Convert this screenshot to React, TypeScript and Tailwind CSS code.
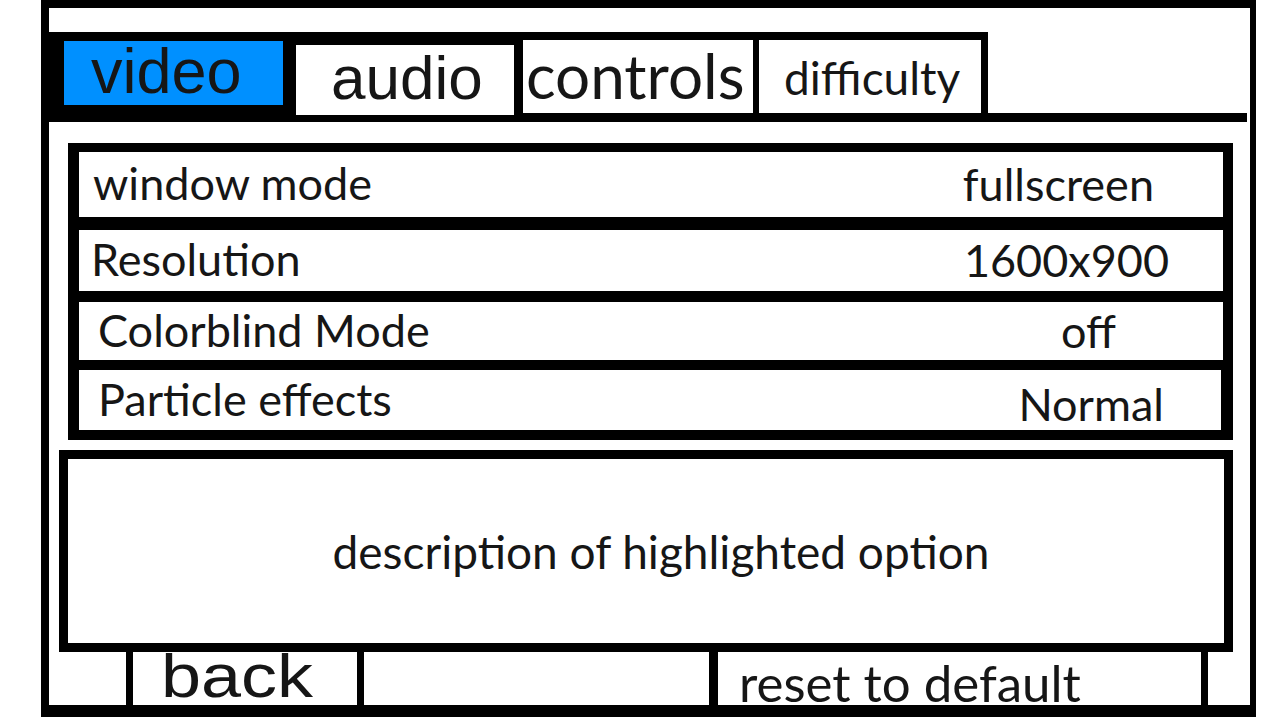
import { FC } from "react";

type Row = { label: string; value: string; labelPad: string; valuePad: string; rowClass: string };

const rows: Row[] = [
  { label: "window mode", value: "fullscreen", labelPad: "pl-[14px]", valuePad: "mr-[69px]", rowClass: "h-[65px]" },
  { label: "Resolution", value: "1600x900", labelPad: "pl-[12px]", valuePad: "mr-[54px]", rowClass: "mt-[13px] h-[61px]" },
  { label: "Colorblind Mode", value: "off", labelPad: "pl-[19px]", valuePad: "mr-[107px]", rowClass: "mt-[11px] h-[58px]" },
  { label: "Particle effects", value: "Normal", labelPad: "pl-[19px]", valuePad: "mr-[57px] mt-[8px]", rowClass: "mt-[10px] h-[60px] mr-[2px]" },
];

const calibri = "font-['Lato','Open_Sans',sans-serif]";
const arial = "font-['Liberation_Sans',Arial,sans-serif]";

const App: FC = () => {
  return (
    <div className="w-[1280px] h-[720px] bg-white overflow-hidden">
      <div className="ml-[41px] w-[1215px] h-[717px] border-t-[8px] border-l-[8px] border-r-[6px] border-b-[12px] border-black flex flex-col text-[#161616]">
        {/* tabs */}
        <div className="shrink-0 mt-[24px] h-[90px] flex">
          <div className="bg-black h-full flex items-start pr-[7px]">
            <div className={`ml-[15px] mt-[9px] w-[219px] h-[64px] bg-[#0090ff] flex items-center pl-[27px] ${arial} text-[63px] leading-none`}>
              <span className="-mt-[4px]">video</span>
            </div>
            <div className={`ml-[13px] mt-[13px] w-[218px] h-[70px] bg-white flex items-center pl-[35px] ${arial} text-[62px] leading-none`}>
              <span className="-mt-[4px]">audio</span>
            </div>
            <div className={`ml-[9px] mt-[8px] w-[230px] h-[73px] bg-white flex items-center pl-[3px] ${calibri} text-[62px] leading-none`}>
              <span className="-mt-[4px]">controls</span>
            </div>
            <div className={`ml-[6px] mt-[8px] w-[222px] h-[73px] bg-white flex items-center pl-[25px] ${calibri} text-[46px] leading-none`}>
              <span className="mt-[2px]">difficulty</span>
            </div>
          </div>
          <div className="flex-1 mr-[3px] border-b-[9px] border-black" />
        </div>

        {/* option list */}
        <div className="shrink-0 mt-[21px] ml-[19px] mr-[17px] bg-black pt-[9px] pl-[11px] pr-[10px] pb-[10px] flex flex-col">
          {rows.map((r) => (
            <div key={r.label} className={`shrink-0 bg-white flex items-center ${r.rowClass} ${calibri} text-[45px] leading-none`}>
              <span className={`${r.labelPad} -mt-[2px]`}>{r.label}</span>
              <span className={`ml-auto ${r.valuePad}`}>{r.value}</span>
            </div>
          ))}
        </div>

        {/* description */}
        <div className={`shrink-0 mt-[10px] ml-[10px] mr-[17px] h-[202px] border-[9px] border-black flex items-center justify-center pl-[30px] ${calibri} text-[46px] leading-none`}>
          <span className="mt-[2px]">description of highlighted option</span>
        </div>

        {/* bottom buttons */}
        <div className="flex-1 min-h-0 flex">
          <div className="ml-[77px] w-[238px] border-x-[7px] border-black flex items-start pl-[28px]">
            <span className={`${arial} text-[61px] leading-none inline-block origin-left scale-x-[1.18] mt-[-6px]`}>back</span>
          </div>
          <div className="ml-[345px] w-[499px] border-l-[9px] border-r-[7px] border-black flex items-end pl-[21px]">
            <span className={`${calibri} text-[51px] leading-none -mb-[3px]`}>reset to default</span>
          </div>
        </div>
      </div>
    </div>
  );
};

export default App;
